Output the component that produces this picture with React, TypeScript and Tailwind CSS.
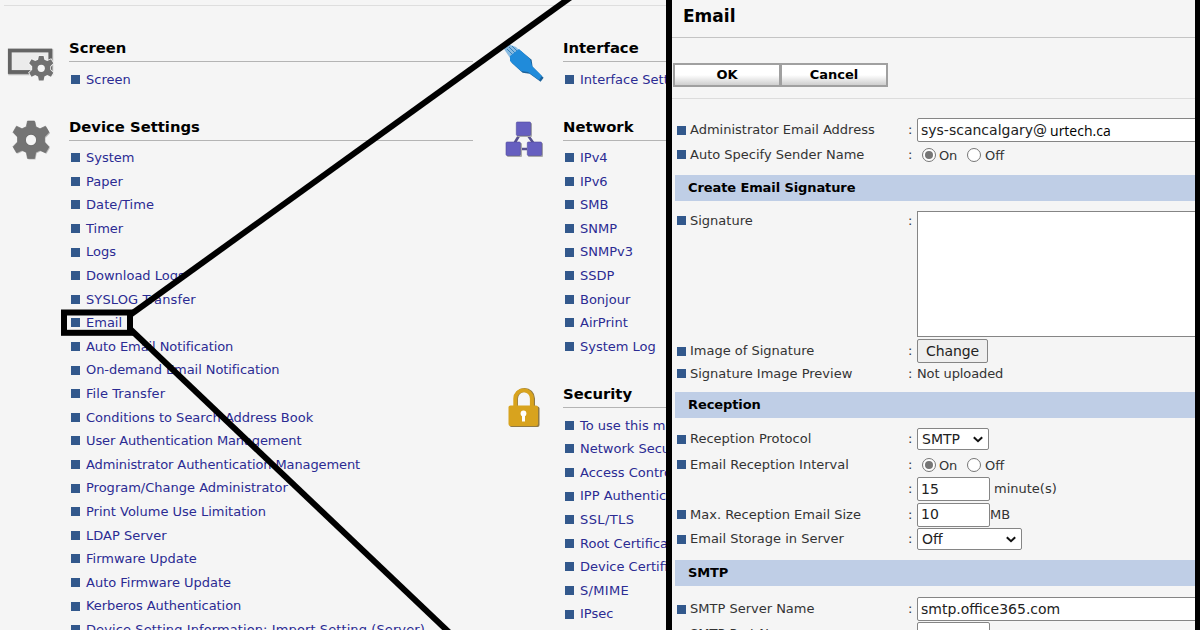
import React from 'react';

interface MenuItem {
  label: string;
  spacing?: string;
}

interface MenuSectionProps {
  title: string;
  icon: React.ReactNode;
  items: MenuItem[];
  className?: string;
}

const deviceItems: MenuItem[] = [
  { label: 'System' },
  { label: 'Paper' },
  { label: 'Date/Time', spacing: 'tracking-[0.1px]' },
  { label: 'Timer' },
  { label: 'Logs' },
  { label: 'Download Logs' },
  { label: 'SYSLOG Transfer', spacing: 'tracking-[0.12px]' },
  { label: 'Email' },
  { label: 'Auto Email Notification', spacing: 'tracking-[-0.08px]' },
  { label: 'On-demand Email Notification', spacing: 'tracking-[-0.07px]' },
  { label: 'File Transfer', spacing: 'tracking-[0.07px]' },
  { label: 'Conditions to Search Address Book' },
  { label: 'User Authentication Management', spacing: 'tracking-[-0.12px]' },
  { label: 'Administrator Authentication Management', spacing: 'tracking-[-0.1px]' },
  { label: 'Program/Change Administrator' },
  { label: 'Print Volume Use Limitation' },
  { label: 'LDAP Server' },
  { label: 'Firmware Update' },
  { label: 'Auto Firmware Update' },
  { label: 'Kerberos Authentication', spacing: 'tracking-[-0.07px]' },
  { label: 'Device Setting Information: Import Setting (Server)', spacing: 'tracking-[0.1px]' },
];

const networkItems: MenuItem[] = [
  { label: 'IPv4' },
  { label: 'IPv6' },
  { label: 'SMB' },
  { label: 'SNMP' },
  { label: 'SNMPv3' },
  { label: 'SSDP' },
  { label: 'Bonjour' },
  { label: 'AirPrint' },
  { label: 'System Log' },
];

const securityItems: MenuItem[] = [
  { label: 'To use this machine securely' },
  { label: 'Network Security' },
  { label: 'Access Control' },
  { label: 'IPP Authentication' },
  { label: 'SSL/TLS', spacing: 'tracking-[0.4px]' },
  { label: 'Root Certificate' },
  { label: 'Device Certificate' },
  { label: 'S/MIME', spacing: 'tracking-[0.3px]' },
  { label: 'IPsec' },
];

const GEAR =
  'M15.500 1h7l1.200 5.500 4.300 2 5.500-2.500 3.500 6-4.500 4.500v5l4.500 4.500-3.500 6-5.500-2.500-4.300 2-1.200 6h-7l-1.200-6-4.300-2-5.500 2.500-3.500-6 4.500-4.500v-5l-4.500-4.500 3.500-6 5.500 2.500 4.300-2z';

function GearIcon() {
  return (
    <svg className="mt-[2px] ml-[12px] h-[41px] w-[39px]" viewBox="0 0 39 40" preserveAspectRatio="none">
      <path d={GEAR} fill="#bbb" transform="translate(1 1)" />
      <path d={GEAR} fill="#747474" stroke="#666" strokeWidth=".6" />
      <circle cx="19" cy="19.500" r="5.600" fill="#f5f5f5" stroke="#5f5f5f" strokeWidth=".8" />
    </svg>
  );
}

function ScreenIcon() {
  return (
    <svg className="mt-[8px] ml-[7px] h-9 w-12" viewBox="0 0 48 36">
      <rect x="3" y="4" width="41.500" height="22.500" fill="none" stroke="#bbb" strokeWidth="3.500" />
      <rect x="2.800" y="3.500" width="40.500" height="21.500" fill="#ebebeb" stroke="#646464" strokeWidth="3.800" />
      <g transform="translate(21.500 8.300) scale(.67)">
        <path d={GEAR} fill="#717171" stroke="#f5f5f5" strokeWidth="2.400" paintOrder="stroke" />
        <circle cx="19" cy="19.500" r="5.400" fill="#f5f5f5" />
      </g>
    </svg>
  );
}

function CableIcon() {
  return (
    <svg className="mt-[1px] ml-[7px] h-11 w-11" viewBox="0 0 44 44">
      <path d="M7 4L15 7L20 12L9 18L5 12L3 9Z" fill="#8bbce2" />
      <path d="M6 9l7 7M8 7l7 7M11 6l7 7" stroke="#3383bd" strokeWidth="1" />
      <path d="M9 17L19 10L30 19L31 26L42 37L39 41L28 33L21 32L10 22Z" fill="#1d629a" transform="translate(.6 .8)" />
      <path d="M9 16L18 9L29 19L31 26L41 36L38 40L27 32L20 31L9 21Z" fill="#208bda" />
    </svg>
  );
}

function NetworkIcon() {
  return (
    <svg className="mt-[3px] ml-[11px] h-[38px] w-[40px]" viewBox="0 0 40 38">
      <path d="M15 13L9 23M22 13L29 23M15 28H22" stroke="#57518f" strokeWidth="2.600" />
      <g fill="#aaa">
        <rect x="12" y="2" width="15" height="14" rx="1" />
        <rect x="2" y="22" width="15" height="14" rx="1" />
        <rect x="23" y="22" width="15" height="14" rx="1" />
      </g>
      <g fill="#665fc0" stroke="#534c9c" strokeWidth=".6">
        <rect x="11.300" y="1" width="14.400" height="13.500" rx="1" />
        <rect x="1" y="21" width="14.400" height="13.500" rx="1" />
        <rect x="22.300" y="21" width="14.400" height="13.500" rx="1" />
      </g>
    </svg>
  );
}

function LockIcon() {
  return (
    <svg className="mt-[3px] ml-[14px] h-10 w-8" viewBox="0 0 32 40">
      <path d="M8 20V10.500a8.500 8.500 0 0 1 17 0V20" fill="none" stroke="#8f7945" strokeWidth="4" />
      <path d="M7.300 20V10.500a8.300 8.300 0 0 1 16.600 0V20" fill="none" stroke="#d8a31e" strokeWidth="4" />
      <rect x="1.500" y="18.500" width="30" height="20.500" rx="2" fill="#8f7945" />
      <rect x=".5" y="17.500" width="29.500" height="20.500" rx="2" fill="#d8a31e" />
      <circle cx="15.500" cy="25.500" r="2.900" fill="#fff" />
      <path d="M14 26h3v7.500h-3z" fill="#fff" />
    </svg>
  );
}

function Bullet() {
  return <span className="h-[9px] w-[9px] shrink-0 bg-[#32588c]" />;
}

function MenuSection({ title, icon, items, className }: MenuSectionProps) {
  return (
    <section className={`flex items-start ${className ?? ''}`}>
      <div className="w-[69px] shrink-0">{icon}</div>
      <div className="w-[404px]">
        <h2 className="h-[23px] border-b border-[#b4b4b4] text-[14.8px] leading-[18px] font-bold text-black">
          {title}
        </h2>
        <ul className="pt-[5.5px]">
          {items.map((item) => (
            <li key={item.label} className="flex h-[23.6px] items-center pl-[2px] text-[13px] text-[#2b2b93]">
              <Bullet />
              <a className={`ml-[6px] ${item.spacing ?? ''}`}>{item.label}</a>
            </li>
          ))}
        </ul>
      </div>
    </section>
  );
}

interface FormRowProps {
  label?: string;
  height: string;
  align?: string;
  children?: React.ReactNode;
}

function FormRow({ label, height, align = 'items-center', children }: FormRowProps) {
  return (
    <div className={`flex ${height} ${align}`}>
      <div className="flex w-[236px] shrink-0 items-center pl-[5px]">
        {label && <Bullet />}
        <span className="ml-[4px]">{label}</span>
      </div>
      <span className="w-[9px] shrink-0">:</span>
      {children}
    </div>
  );
}

function Band({ title }: { title: string }) {
  return (
    <h3 className="ml-[3px] flex h-[26px] items-center bg-[#bfcee6] pl-[13px] text-[13px] font-bold tracking-[-0.1px] text-black">
      {title}
    </h3>
  );
}

function TextField({ value, width, children }: { value?: string; width: string; children?: React.ReactNode }) {
  return (
    <div
      className={`flex h-6 shrink-0 items-center rounded-[2px] border border-[#858585] bg-white pl-[3px] text-[14px] text-[#222] ${width}`}
    >
      {value}
      {children}
    </div>
  );
}

function SelectField({ value, width }: { value: string; width: string }) {
  return (
    <div
      className={`flex h-[22px] shrink-0 items-center justify-between rounded-[2px] border border-[#858585] bg-white pr-[5px] pl-[4px] text-[14px] text-[#222] ${width}`}
    >
      {value}
      <svg className="h-[7px] w-[10px]" viewBox="0 0 10 7" fill="none" stroke="#111" strokeWidth="2">
        <path d="M.8 1.200L5 5.200L9.200 1.200" />
      </svg>
    </div>
  );
}

function OnOff() {
  return (
    <div className="flex items-center pl-[5px]">
      <span className="flex h-[14px] w-[14px] items-center justify-center rounded-full border border-[#767676] bg-white">
        <span className="h-2 w-2 rounded-full bg-[#767676]" />
      </span>
      <span className="mt-[3px] ml-[3px] w-[28px] tracking-[-0.3px]">On</span>
      <span className="h-[14px] w-[14px] rounded-full border border-[#767676] bg-white" />
      <span className="mt-[3px] ml-[4px]">Off</span>
    </div>
  );
}

function EmailPanel() {
  return (
    <div className="w-[523px] shrink-0 overflow-hidden text-[13px] text-[#333]">
      <h1 className="h-[38px] border-b border-[#c4c4c4] pt-[4px] pl-[11px] text-[17px] leading-6 font-bold text-black">
        Email
      </h1>
      <div className="flex h-[61px] items-start border-b border-[#dcdcdc] pt-[25px] pl-[1px] text-[13px] font-bold text-black">
        <button className="h-6 w-[108px] border-2 border-[#a0a0a0] bg-linear-to-b from-white from-50% to-[#cfcfcf] leading-5">
          OK
        </button>
        <button className="-ml-px h-6 w-[108px] border-2 border-[#a0a0a0] bg-linear-to-b from-white from-50% to-[#cfcfcf] leading-5">
          Cancel
        </button>
      </div>
      <div className="h-[19px]" />
      <FormRow label="Administrator Email Address" height="h-6">
        <TextField value="sys-scancalgary@" width="w-[300px]">
          <span className="ml-[3px] font-['Open_Sans',sans-serif] text-black">urtech.ca</span>
        </TextField>
      </FormRow>
      <FormRow label="Auto Specify Sender Name" height="h-[25px]">
        <OnOff />
      </FormRow>
      <div className="h-2" />
      <Band title="Create Email Signature" />
      <div className="h-[10px]" />
      <FormRow label="Signature" height="h-[126px]" align="items-start">
        <div className="h-[126px] w-[300px] shrink-0 border border-[#858585] bg-white" />
      </FormRow>
      <div className="h-[2px]" />
      <FormRow label="Image of Signature" height="h-6">
        <button className="h-6 w-[71px] rounded-[2px] border border-[#858585] bg-[#efefef] text-[14px] tracking-[-0.1px] text-[#222]">
          Change
        </button>
      </FormRow>
      <FormRow label="Signature Image Preview" height="h-[21px]">
        <span className="tracking-[-0.1px]">Not uploaded</span>
      </FormRow>
      <div className="h-2" />
      <Band title="Reception" />
      <div className="h-[10px]" />
      <FormRow label="Reception Protocol" height="h-[22px]">
        <SelectField value="SMTP" width="w-[72px]" />
      </FormRow>
      <div className="h-[2px]" />
      <FormRow label="Email Reception Interval" height="h-[25px]">
        <OnOff />
      </FormRow>
      <FormRow height="h-6">
        <TextField value="15" width="w-[73px]" />
        <span className="ml-[4px]">minute(s)</span>
      </FormRow>
      <div className="h-[1px]" />
      <FormRow label="Max. Reception Email Size" height="h-[25px]">
        <TextField value="10" width="w-[73px]" />
        <span>MB</span>
      </FormRow>
      <div className="h-[1px]" />
      <FormRow label="Email Storage in Server" height="h-[22px]">
        <SelectField value="Off" width="w-[105px]" />
      </FormRow>
      <div className="h-[10px]" />
      <Band title="SMTP" />
      <div className="h-[11px]" />
      <FormRow label="SMTP Server Name" height="h-6">
        <TextField value="smtp.office365.com" width="w-[300px]" />
      </FormRow>
      <div className="h-[1px]" />
      <FormRow label="SMTP Port No." height="h-6">
        <TextField width="w-[73px]" />
      </FormRow>
    </div>
  );
}

export default function App() {
  return (
    <div className="relative flex h-[630px] w-[1200px] overflow-hidden bg-[#f5f5f5] font-['DejaVu_Sans',Verdana,sans-serif] whitespace-nowrap">
      <div className="w-[666px] shrink-0 overflow-hidden">
        <div className="ml-[4px] h-[6px] border-b border-[#dedede]" />
        <div className="flex pt-[33px]">
          <div className="w-[494px] shrink-0">
            <MenuSection title="Screen" icon={<ScreenIcon />} items={[{ label: 'Screen' }]} className="h-[78.500px]" />
            <MenuSection title="Device Settings" icon={<GearIcon />} items={deviceItems} />
          </div>
          <div>
            <MenuSection title="Interface" icon={<CableIcon />} items={[{ label: 'Interface Settings' }]} className="h-[78.500px]" />
            <MenuSection title="Network" icon={<NetworkIcon />} items={networkItems} className="h-[267.500px]" />
            <MenuSection title="Security" icon={<LockIcon />} items={securityItems} />
          </div>
        </div>
      </div>
      <div className="w-[6px] shrink-0 bg-black" />
      <EmailPanel />
      <div className="w-[5px] shrink-0 bg-black" />

      {/* callout from the Email link to the panel */}
      <svg className="absolute top-0 left-0 h-[630px] w-[666px]" viewBox="0 0 666 630" fill="none" stroke="#000" strokeWidth="6">
        <path d="M130 315L571 -3" />
        <path d="M129 328L455 638" />
        <rect x="64" y="312.500" width="66" height="20.300" />
      </svg>
    </div>
  );
}
